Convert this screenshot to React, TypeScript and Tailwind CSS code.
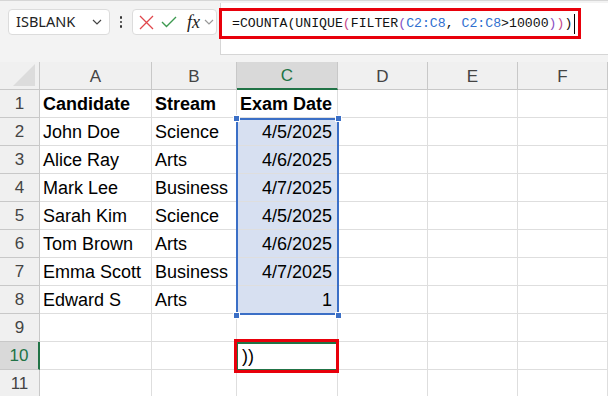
import React from 'react'

const cols = ['A', 'B', 'C', 'D', 'E', 'F']
const widths = ['w-[112px]', 'w-[85px]', 'w-[101px]', 'w-[90px]', 'w-[90px]', 'w-[90px]']

const rows: string[][] = [
  ['Candidate', 'Stream', 'Exam Date'],
  ['John Doe', 'Science', '4/5/2025'],
  ['Alice Ray', 'Arts', '4/6/2025'],
  ['Mark Lee', 'Business', '4/7/2025'],
  ['Sarah Kim', 'Science', '4/5/2025'],
  ['Tom Brown', 'Arts', '4/6/2025'],
  ['Emma Scott', 'Business', '4/7/2025'],
  ['Edward S', 'Arts', '1'],
  [],
  [],
  [],
]

function Chevron({ className }: { className?: string }) {
  return (
    <svg className={className} width="10" height="6" viewBox="0 0 10 6" fill="none">
      <path d="M1 1l4 4 4-4" stroke="currentColor" strokeWidth="1.2" />
    </svg>
  )
}

function FormulaBar() {
  return (
    <div className="relative h-[62px] border-t border-[#d6d6d6] bg-[#f3f3f3]">
      <div className="flex items-start pt-[8px] pl-[8px]">
        {/* name box */}
        <div className="flex h-[26px] w-[102px] items-center justify-between rounded-[4px] border border-[#dcdcdc] bg-white pl-[7px] pr-[7px] text-[14.5px] text-[#222]">
          <span>ISBLANK</span>
          <Chevron className="text-[#444]" />
        </div>
        <div className="flex h-[26px] w-[22px] flex-col items-center justify-center gap-[2px]">
          <span className="h-[2.5px] w-[2.5px] rounded-full bg-[#333]" />
          <span className="h-[2.5px] w-[2.5px] rounded-full bg-[#333]" />
          <span className="h-[2.5px] w-[2.5px] rounded-full bg-[#333]" />
        </div>
        {/* buttons */}
        <div className="flex h-[26px] w-[85px] items-center rounded-[4px] border border-[#dcdcdc] bg-white pl-[6px]">
          <svg width="15" height="15" viewBox="0 0 15 15" fill="none">
            <path d="M1 1l13 13M14 1L1 14" stroke="#e0474c" strokeWidth="1.3" />
          </svg>
          <svg className="ml-[7px]" width="16" height="12" viewBox="0 0 16 12" fill="none">
            <path d="M1 6l4.5 4.5L15 1" stroke="#3d9a50" strokeWidth="1.4" />
          </svg>
          <span className="ml-[10px] text-[18px] italic leading-none text-[#222]" style={{ fontFamily: '"Liberation Serif", serif' }}>
            fx
          </span>
          <Chevron className="ml-[4px] text-[#999]" />
        </div>
      </div>
      {/* formula input */}
      <div className="absolute left-[220px] top-[2px] h-[52px] w-[388px] border-b border-l border-[#d6d6d6] bg-white" />
      <div
        className="absolute left-[219px] top-[7px] flex h-[31px] w-[362px] items-center border-[3px] border-[#e8000b] pl-[10px] text-[13.2px] text-[#111]"
        style={{ fontFamily: '"Liberation Mono", monospace' }}
      >
        <span>=COUNTA(UNIQUE</span>
        <span className="text-[#c54a8a]">(</span>
        <span>FILTER</span>
        <span className="text-[#8a4fc4]">(</span>
        <span className="text-[#2f6fcf]">C2:C8</span>
        <span>,&nbsp;</span>
        <span className="text-[#2f6fcf]">C2:C8</span>
        <span>&gt;10000</span>
        <span className="text-[#8a4fc4]">)</span>
        <span className="text-[#c54a8a]">)</span>
        <span>)</span>
        <span className="ml-[2px] h-[20px] w-px bg-black" />
      </div>
    </div>
  )
}

function Grid() {
  return (
    <div className="relative" style={{ fontFamily: '"Liberation Sans", Arial, sans-serif' }}>
      {/* column headers */}
      <div className="flex h-[28px] bg-[#f0f0f0] text-[17px] text-[#444]">
        <div className="relative w-[40px] border-b border-r border-[#c8c8c8]">
          <svg className="absolute bottom-[3px] right-[4px]" width="22" height="22" viewBox="0 0 22 22">
            <path d="M22 0V22H0Z" fill="#dcdcdc" />
          </svg>
        </div>
        {cols.map((c, i) => (
          <div
            key={c}
            className={`${widths[i]} flex items-center justify-center pt-[2px] ${
              c === 'C' ? 'border-b-2 border-r border-b-[#217346] border-r-[#c8c8c8] bg-[#d9d9d9] text-[#217346]' : 'border-b border-r border-[#c8c8c8]'
            }`}
          >
            {c}
          </div>
        ))}
      </div>
      {rows.map((r, ri) => {
        const n = ri + 1
        const active = n === 10
        return (
          <div key={n} className="flex h-[28px] text-[18px]">
            <div
              className={`flex w-[40px] items-center justify-center pt-[1px] text-[17px] ${
                active
                  ? 'border-r-2 border-b border-r-[#217346] border-b-[#c8c8c8] bg-[#d9d9d9] text-[#217346]'
                  : 'border-b border-r border-[#c8c8c8] bg-[#f0f0f0] text-[#444]'
              }`}
            >
              {n}
            </div>
            {cols.map((c, ci) => {
              const v = r[ci] ?? ''
              const sel = c === 'C' && n >= 2 && n <= 8
              return (
                <div
                  key={c}
                  className={`${widths[ci]} flex items-center overflow-visible whitespace-nowrap border-b border-r border-[#dedede] px-[3px] pt-[2px] text-black ${
                    sel ? 'justify-end bg-[#d7e0f1] pr-[5px]' : ''
                  } ${n === 1 ? 'font-bold' : ''}`}
                >
                  {n === 10 && c === 'C' ? <span className="pl-[2px]">))</span> : v}
                </div>
              )
            })}
          </div>
        )
      })}
      {/* selection outline C2:C8 */}
      <div className="pointer-events-none absolute left-[236px] top-[56px] h-[197px] w-[103px] border-2 border-[#3b6fc6]" />
      {[
        'left-[233px] top-[53px]',
        'left-[335px] top-[53px]',
        'left-[233px] top-[250px]',
        'left-[335px] top-[250px]',
      ].map((p) => (
        <div key={p} className={`absolute ${p} h-[7px] w-[7px] border border-white bg-[#3b6fc6]`} />
      ))}
      {/* active cell C10 */}
      <div className="pointer-events-none absolute left-[236px] top-[280px] h-[29px] w-[102px] border-2 border-[#217346]" />
      <div className="pointer-events-none absolute left-[234px] top-[277px] h-[34px] w-[105px] border-[3px] border-[#e8000b]" />
    </div>
  )
}

export default function App() {
  return (
    <div className="h-[396px] w-[608px] overflow-hidden bg-white">
      <FormulaBar />
      <Grid />
    </div>
  )
}
